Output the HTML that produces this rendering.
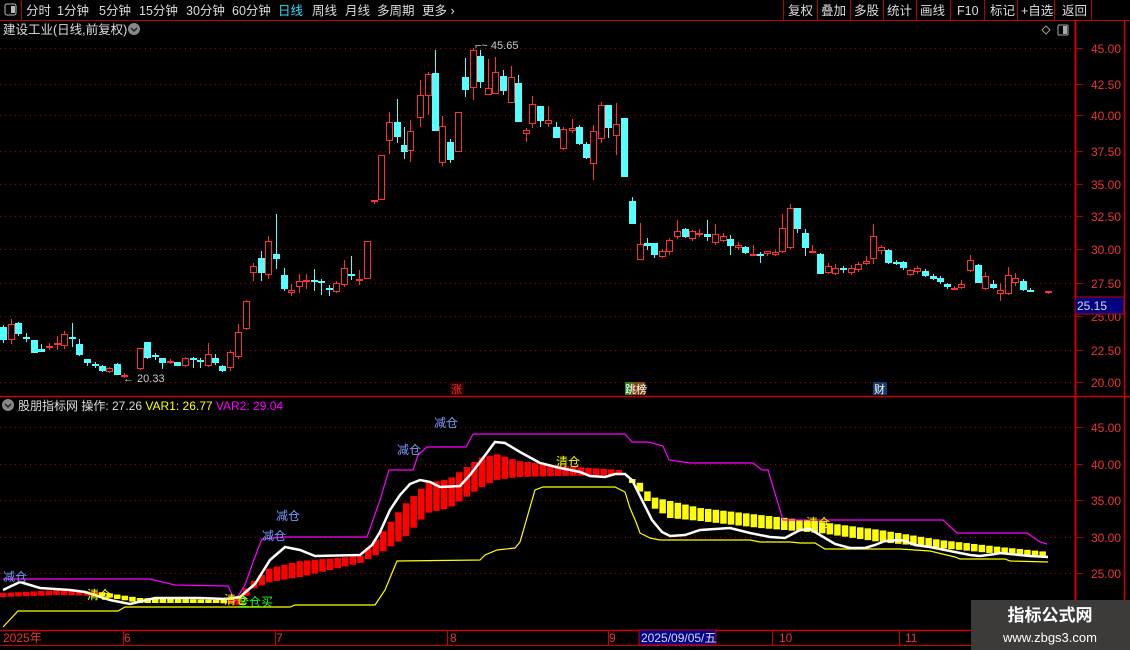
<!DOCTYPE html>
<html><head><meta charset="utf-8">
<style>
html,body{margin:0;padding:0;background:#000;width:1130px;height:650px;overflow:hidden;font-family:"Liberation Sans","Noto Sans CJK SC",sans-serif;}
svg{position:absolute;left:0;top:0}
svg text{font-family:"Liberation Sans","Noto Sans CJK SC",sans-serif;}
</style></head><body>
<svg id="s" width="1130" height="650" xmlns="http://www.w3.org/2000/svg">
<rect width="1130" height="650" fill="#000"/>
<line x1="0" y1="20.5" x2="1130" y2="20.5" stroke="#b00" />
<line x1="21.5" y1="0" x2="21.5" y2="20" stroke="#b00"/>
<rect x="5" y="4" width="11" height="11" fill="none" stroke="#bbb" rx="2"/><rect x="11" y="6" width="4" height="7" fill="#bbb"/>
<g font-size="12.5" fill="#ddd">
<text x="26" y="15">分时</text><text x="57" y="15">1分钟</text><text x="99" y="15">5分钟</text><text x="139" y="15">15分钟</text><text x="186" y="15">30分钟</text><text x="232" y="15">60分钟</text>
<text x="278" y="15" fill="#33ddff">日线</text><text x="312" y="15">周线</text><text x="345" y="15">月线</text><text x="377" y="15">多周期</text><text x="422" y="15">更多 ›</text>
</g>
<g stroke="#b00"><line x1="783.5" y1="0" x2="783.5" y2="20"/><line x1="817.5" y1="0" x2="817.5" y2="20"/><line x1="850.5" y1="0" x2="850.5" y2="20"/><line x1="883.5" y1="0" x2="883.5" y2="20"/><line x1="916.5" y1="0" x2="916.5" y2="20"/><line x1="950.5" y1="0" x2="950.5" y2="20"/><line x1="984.5" y1="0" x2="984.5" y2="20"/><line x1="1017.5" y1="0" x2="1017.5" y2="20"/><line x1="1054.5" y1="0" x2="1054.5" y2="20"/><line x1="1091.5" y1="0" x2="1091.5" y2="20"/></g>
<g font-size="12.5" fill="#ddd"><text x="788" y="15">复权</text><text x="821" y="15">叠加</text><text x="854" y="15">多股</text><text x="887" y="15">统计</text><text x="920" y="15">画线</text><text x="957" y="15">F10</text><text x="990" y="15">标记</text><text x="1021" y="15">+自选</text><text x="1062" y="15">返回</text></g>
<text x="3" y="34" font-size="12.5" fill="#ddd">建设工业(日线,前复权)</text>
<circle cx="134" cy="29" r="6" fill="#888"/><path d="M131 28l3 3 3-3" stroke="#222" fill="none" stroke-width="1.5"/>
<path d="M1046 26l4 4-4 4-4-4z" fill="none" stroke="#999"/>
<rect x="1058" y="25" width="10" height="10" fill="none" stroke="#aaa" rx="1"/><rect x="1063" y="26" width="4" height="8" fill="#aaa"/>
<line x1="1075.5" y1="20" x2="1075.5" y2="650" stroke="#c00" stroke-width="2"/>
<line x1="1124.5" y1="20" x2="1124.5" y2="650" stroke="#c00" stroke-width="1.5"/>
<line x1="0" y1="396.5" x2="1130" y2="396.5" stroke="#c00" stroke-width="1.5"/>
<line x1="0" y1="630.5" x2="1075" y2="630.5" stroke="#c00" stroke-width="1.5"/>
<line x1="0" y1="645.5" x2="1075" y2="645.5" stroke="#c00"/>
<g id="grid" stroke="#a00" stroke-dasharray="1 4"></g>
<g font-size="12" fill="#e33" text-anchor="end" id="ax"></g>
<rect x="1075" y="297" width="49" height="17" fill="#000080" stroke="#c00"/>
<text x="1077" y="310" font-size="12" fill="#ddd">25.15</text>
<g id="c"></g>
<text x="475" y="49" font-size="11" fill="#ccc">⌐~ 45.65</text>
<text x="123" y="382" font-size="11" fill="#ccc">← 20.33</text>
<rect x="450" y="382" width="14" height="13" fill="#300"/><text x="451" y="393" font-size="11" fill="#e33">涨</text>
<rect x="625" y="382" width="20" height="13" fill="#7a4a10"/><rect x="625" y="382" width="6" height="13" fill="#1a8a1a"/><text x="625" y="393" font-size="11" fill="#fff">跳榜</text>
<rect x="873" y="382" width="14" height="13" fill="#123a6a"/><text x="874" y="393" font-size="11" fill="#fff">财</text>
<circle cx="8" cy="405" r="6" fill="#888"/><path d="M5 404l3 3 3-3" stroke="#222" fill="none" stroke-width="1.5"/>
<text x="18" y="410" font-size="12" fill="#ddd">股朋指标网 <tspan>操作: 27.26</tspan> <tspan fill="#ff0">VAR1: 26.77</tspan> <tspan fill="#f0f">VAR2: 29.04</tspan></text>
<g id="b"></g>
<polyline fill="none" stroke="#ff0" stroke-width="1.2" points="3,627 18,611 118,611 125,607 290,607 295,605 375,605 385,590 397,561 480,560 485,555 497,550 515,548 520,542 535,490 543,487 615,487 625,492 630,508 636,522 640,533 650,538 660,540 750,540 760,542 790,542 800,543 815,543 825,549 900,549 930,551 955,557 960,559 1005,559 1010,561 1048,562"/>
<polyline fill="none" stroke="#f0f" stroke-width="1.2" points="3,579 150,579 175,585 228,586 235,601 245,585 252,565 258,549 262,539 283,537 367,537 380,500 389,470 413,470 418,455 427,447 466,447 473,434 625,434 632,442 648,442 663,446 669,460 690,463 753,463 762,470 768,470 783,520 943,520 957,533 1027,533 1040,542 1047,544"/>
<polyline fill="none" stroke="#fff" stroke-width="2.5" points="3,590 20,582 40,588 70,590 85,592 110,600 130,604 155,598 200,598 225,599 240,597 255,584 270,560 285,547 300,550 315,556 360,555 372,545 380,532 390,510 400,495 410,484 420,480 430,482 440,487 460,486 470,475 480,462 495,442 505,443 520,452 540,463 560,468 580,472 590,476 605,477 615,474 625,474 632,480 642,500 652,520 662,532 670,536 685,535 700,530 730,528 750,533 770,537 785,538 800,530 810,529 820,535 835,544 850,548 865,548 875,545 885,541 900,540 905,541 915,545 930,547 945,550 960,553 970,555 980,556 995,554 1000,553 1010,554 1030,556 1048,557"/>
<g font-size="12">
<text x="3" y="581" fill="#7a9cff">减仓</text><text x="262" y="540" fill="#7a9cff">减仓</text><text x="276" y="520" fill="#7a9cff">减仓</text><text x="397" y="454" fill="#7a9cff">减仓</text><text x="434" y="427" fill="#7a9cff">减仓</text>
<text x="87" y="599" fill="#ff0">清仓</text><text x="224" y="604" fill="#ff0">清仓</text><text x="556" y="466" fill="#ff0">清仓</text><text x="806" y="527" fill="#ff0">清仓</text>
<text x="237" y="606" fill="#2f2">全仓买</text>
</g>
<g font-size="12" fill="#e33"><text x="3" y="642">2025年</text><text x="124" y="642">6</text><text x="276" y="642">7</text><text x="450" y="642">8</text><text x="609" y="642">9</text><text x="779" y="642">10</text><text x="905" y="642">11</text></g>
<g stroke="#c00"><line x1="123.5" y1="630" x2="123.5" y2="645"/><line x1="275.5" y1="630" x2="275.5" y2="645"/><line x1="447.5" y1="630" x2="447.5" y2="645"/><line x1="608.5" y1="630" x2="608.5" y2="645"/><line x1="772.5" y1="630" x2="772.5" y2="645"/><line x1="899.5" y1="630" x2="899.5" y2="645"/></g>
<rect x="639" y="630" width="77" height="15" fill="#000090" stroke="#c00"/><text x="641" y="642" font-size="12" fill="#ddd">2025/09/05/五</text>
<rect x="971" y="600" width="159" height="50" fill="#3d3a3a"/>
<text x="1050" y="621" font-size="17" font-weight="bold" fill="#fff" text-anchor="middle">指标公式网</text>
<text x="1050" y="642" font-size="13" fill="#fff" text-anchor="middle">www.zbgs3.com</text>
</svg>
<script>
var NS="http://www.w3.org/2000/svg";
function el(p,t,a){var e=document.createElementNS(NS,t);for(var k in a)e.setAttribute(k,a[k]);document.getElementById(p).appendChild(e);return e;}
var up=[[48,"45.00"],[84,"42.50"],[115,"40.00"],[151,"37.50"],[184,"35.00"],[216,"32.50"],[249,"30.00"],[283,"27.50"],[316,"25.00"],[350,"22.50"],[382,"20.00"]];
var lo=[[427,"45.00"],[464,"40.00"],[500,"35.00"],[537,"30.00"],[573,"25.00"]];
up.concat(lo).forEach(function(g){el("grid","line",{x1:0,x2:1075,y1:g[0]+.5,y2:g[0]+.5});el("grid","line",{x1:1075,x2:1083,y1:g[0]+.5,y2:g[0]+.5,"stroke-dasharray":"none"});var t=el("ax","text",{x:1121,y:g[0]+5});t.textContent=g[1];});
var C="3 327 340 325 343 c|11 324 340 319 344 r|18 323 334 322 336 c|26 337 339 333 342 c|34 340 353 340 353 c|41 349 352 344 352 c|49 346 348 343 350 r|57 343 345 336 350 r|64 334 346 331 349 r|72 337 338 323 347 c|79 344 355 339 356 c|87 359 363 359 366 c|95 364 365 362 368 c|102 366 371 365 372 c|109 368 372 367 373 r|117 364 375 363 375 c|124 375 377 373 378 r|140 348 369 348 370 r|147 342 358 342 359 c|155 355 357 353 360 c|162 358 363 358 369 c|170 361 363 359 364 r|177 362 366 362 366 c|185 358 366 357 367 r|193 358 359 357 368 c|200 360 361 358 368 c|208 354 366 343 367 r|215 358 363 354 365 c|222 366 371 365 372 c|230 352 368 350 371 r|238 332 357 324 359 r|246 301 329 300 330 r|253 266 273 263 281 r|261 258 273 251 281 c|268 241 275 236 279 r|276 254 259 214 269 c|284 275 289 268 291 c|291 290 293 284 296 r|299 281 287 274 293 r|306 280 281 274 289 r|314 280 281 269 291 c|321 281 282 279 295 c|329 288 289 285 296 c|336 283 292 281 293 r|344 268 285 260 287 r|351 274 275 256 280 c|359 279 280 270 285 r|367 241 279 241 279 r|374 200 202 200 204 r|381 155 200 155 200 r|389 122 141 112 154 r|397 122 137 99 143 c|404 145 152 127 159 c|410 131 151 120 162 r|420 95 118 80 127 r|428 74 96 72 115 r|435 73 131 50 131 c|442 126 163 116 166 r|450 142 160 139 163 c|458 112 152 112 152 r|465 77 90 58 97 c|473 50 88 48 100 r|480 56 82 50 88 c|488 88 95 59 95 r|495 72 94 57 94 r|503 76 91 70 95 c|511 77 103 66 103 r|518 83 122 75 122 c|526 130 134 128 142 r|532 104 124 96 128 r|540 106 121 106 127 c|548 120 124 106 127 r|556 127 138 122 138 c|563 129 149 127 150 r|572 128 131 119 133 r|579 127 144 125 145 c|586 144 158 142 159 c|593 131 164 125 180 r|601 105 139 102 143 r|608 105 128 105 138 c|616 124 136 103 155 r|624 118 177 118 177 c|632 201 224 197 224 c|640 244 260 223 260 r|647 243 246 238 250 c|654 243 255 243 258 c|662 251 257 249 258 r|669 240 252 238 255 r|677 231 237 220 239 r|685 229 237 228 238 c|692 231 239 230 241 r|699 233 234 229 237 r|707 234 237 220 241 c|715 234 243 224 245 r|723 236 241 233 242 r|730 239 246 235 255 c|738 245 248 242 250 r|745 247 253 246 254 c|753 254 255 245 255 r|760 254 255 252 263 c|767 251 254 251 256 r|775 252 255 250 256 r|782 228 252 214 253 r|790 208 248 204 249 r|797 208 229 208 233 c|805 233 248 229 256 c|812 251 252 245 252 r|820 254 274 253 274 c|828 266 273 263 274 r|835 268 274 264 275 r|843 268 270 266 273 c|851 268 273 265 275 r|858 264 270 262 272 r|866 261 264 256 265 r|873 236 259 224 264 r|881 247 251 245 254 r|888 250 263 249 264 c|896 262 263 260 265 c|903 262 268 261 270 c|910 270 275 269 276 r|917 268 272 266 274 r|925 271 276 269 277 c|933 276 279 274 280 c|940 278 282 276 284 c|947 284 287 283 289 c|954 288 289 286 290 r|961 284 288 280 289 r|970 260 271 255 272 r|978 265 283 264 283 c|985 276 289 272 290 r|993 284 288 280 289 c|1000 290 294 283 301 r|1008 275 294 267 295 r|1015 278 283 273 286 r|1023 281 290 279 291 c|1030 290 291 288 291 c|1048 291 293 291 294 r".split("|");
C.forEach(function(s){var a=s.split(" "),x=+a[0],t=+a[1],b=+a[2],h=+a[3],l=+a[4],r=a[5]=="r";var col=r?"#ff3030":"#54ffff";
el("c","line",{x1:x+.5,x2:x+.5,y1:h,y2:l,stroke:col});
if(b-t<2){el("c","rect",{x:x-3,y:t,width:7,height:2,fill:col});}
else if(r){el("c","rect",{x:x-2.5,y:t+.5,width:6,height:b-t-1,fill:"#000",stroke:col});}
else el("c","rect",{x:x-3,y:t,width:7,height:b-t,fill:col});});
function lerp(pts,x){for(var i=0;i<pts.length-1;i++){if(x>=pts[i][0]&&x<=pts[i+1][0]){var f=(x-pts[i][0])/(pts[i+1][0]-pts[i][0]);return pts[i][1]+f*(pts[i+1][1]-pts[i][1]);}}return pts[pts.length-1][1];}
var rt=[[3,593],[60,590],[100,592],[140,598],[220,600],[240,596],[250,584],[270,568],[300,561],[360,556],[380,535],[404,505],[427,483],[449,479],[480,458],[496,454],[518,461],[560,466],[620,470]];
var rb=[[3,597],[60,595],[100,596],[140,603],[220,603],[240,605],[250,590],[270,582],[300,577],[360,563],[380,553],[404,538],[427,513],[449,508],[480,488],[496,480],[518,477],[560,476],[620,475]];
for(var x=3;x<=622;x+=7.6){var t=lerp(rt,x),b=lerp(rb,x);var c=(x>100&&x<225)?"#ff0":"#f00";el("b","rect",{x:x-3,y:t,width:6.5,height:Math.max(3,b-t),fill:c});}
var yt=[[632,479],[640,483],[652,497],[670,501],[700,508],[760,515],[820,522],[880,530],[940,540],[1000,547],[1048,552]];
var yb=[[632,483],[640,492],[652,507],[670,518],[700,521],[760,528],[820,533],[880,542],[940,548],[1000,554],[1048,557]];
for(var x=632;x<=1048;x+=7.6){var t=lerp(yt,x),b=lerp(yb,x);el("b","rect",{x:x-3,y:t,width:6.5,height:Math.max(3,b-t),fill:"#ff0"});}
</script>
</body></html>
